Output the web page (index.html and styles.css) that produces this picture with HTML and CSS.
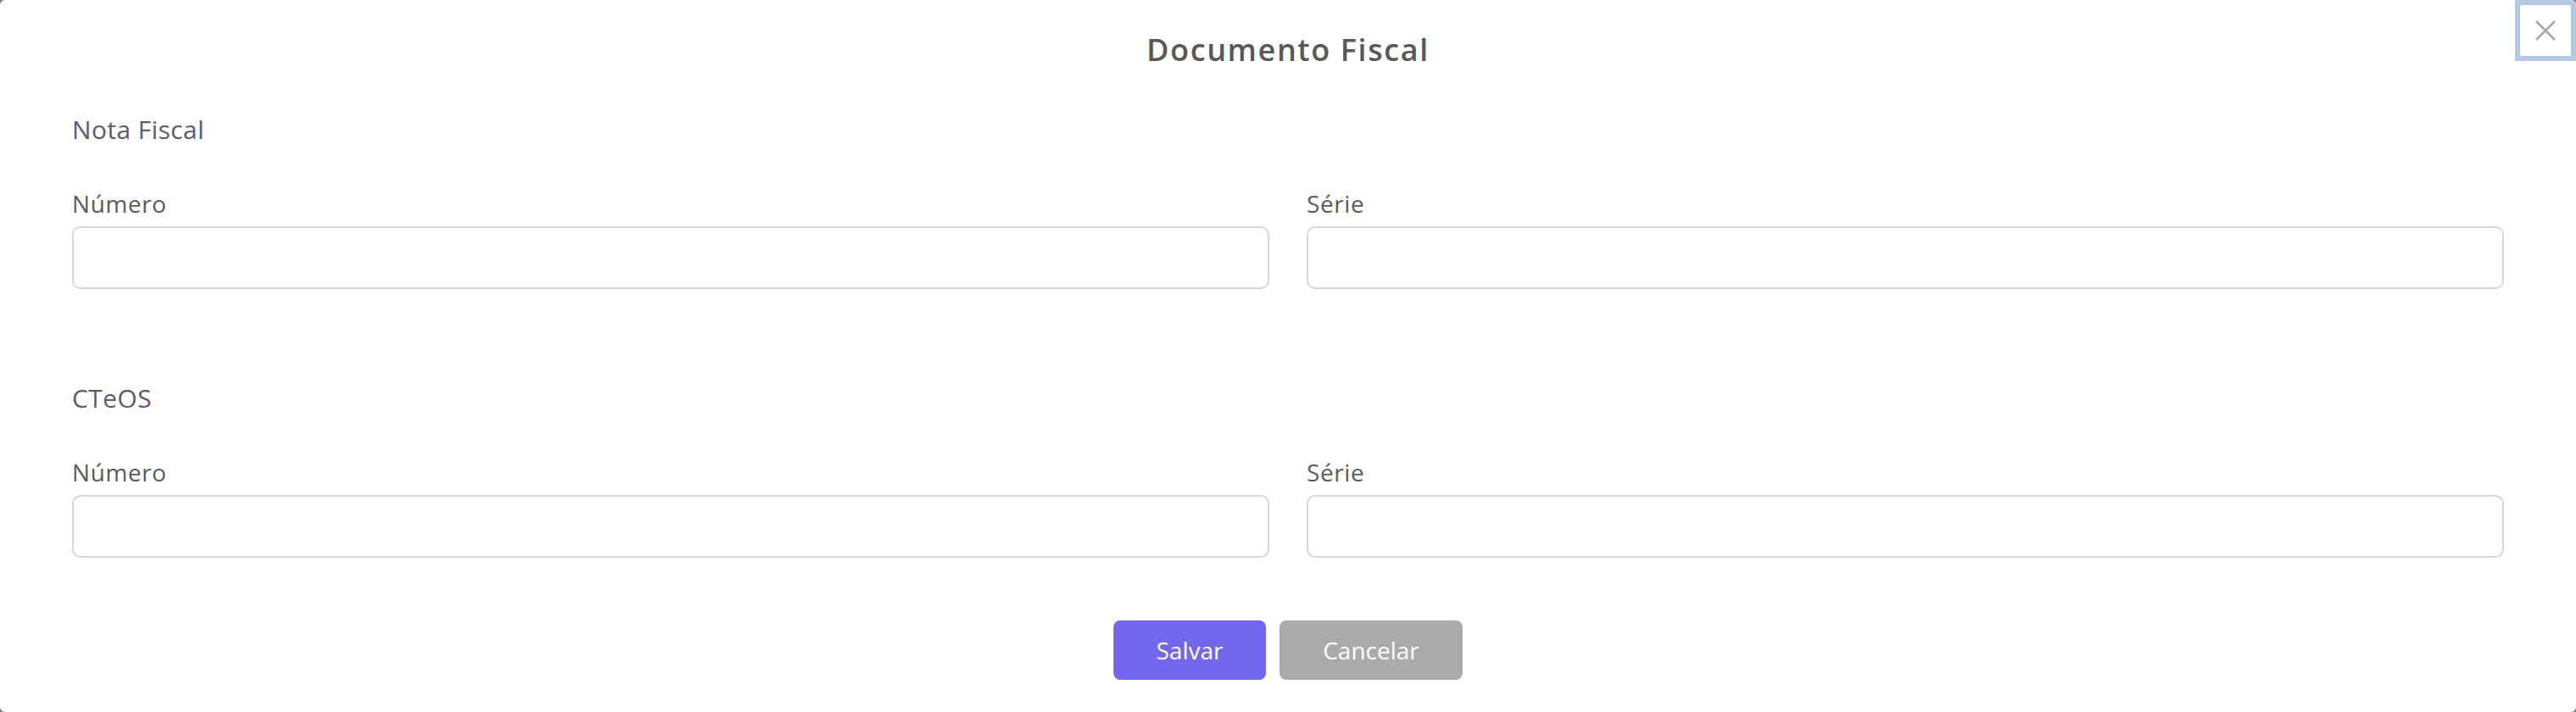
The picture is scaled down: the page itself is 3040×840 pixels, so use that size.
FILE: index.html
```html
<!DOCTYPE html>
<html lang="pt-BR">
<head>
<meta charset="utf-8">
<title>Documento Fiscal</title>
<link rel="stylesheet" href="styles.css">
</head>
<body>
<div class="modal">
  <button class="close" aria-label="Fechar">
    <svg viewBox="0 0 26 26" width="26" height="26"><path d="M2 2 L24 24 M24 2 L2 24" stroke="#a9a9a9" stroke-width="2.6" fill="none"/></svg>
  </button>
  <h1 class="title">Documento Fiscal</h1>
  <section class="group">
    <h2 class="group-title">Nota Fiscal</h2>
    <div class="fields">
      <label class="field"><span class="label">Número</span><input class="input" type="text"></label>
      <label class="field"><span class="label">Série</span><input class="input" type="text"></label>
    </div>
  </section>
  <section class="group group-2">
    <h2 class="group-title">CTeOS</h2>
    <div class="fields">
      <label class="field"><span class="label">Número</span><input class="input" type="text"></label>
      <label class="field"><span class="label">Série</span><input class="input" type="text"></label>
    </div>
  </section>
  <div class="actions">
    <button class="btn btn-primary">Salvar</button>
    <button class="btn btn-secondary">Cancelar</button>
  </div>
</div>
</body>
</html>
```
FILE: styles.css
```css
* { box-sizing: border-box; }
html, body { margin: 0; padding: 0; }
body {
  width: 3040px;
  height: 840px;
  background: #7f7f7f;
  font-family: "Open Sans", "Noto Sans", sans-serif;
  overflow: hidden;
}
.modal {
  position: relative;
  width: 3040px;
  height: 840px;
  background: #fff;
  border-radius: 6px;
  padding: 0 85px;
  display: flex;
  flex-direction: column;
}
.close {
  position: absolute;
  top: 0;
  right: 0;
  width: 72px;
  height: 72px;
  border: 6px solid #b2cbe3;
  border-top-right-radius: 8px;
  background: #fff;
  padding: 0;
  display: flex;
  align-items: center;
  justify-content: center;
}
.title {
  margin: 37px 0 0;
  text-align: center;
  font-size: 36px;
  line-height: 44px;
  font-weight: 600;
  letter-spacing: 1.6px;
  color: #585858;
}
.group { margin-top: 54px; }
.group-2 { margin-top: 111px; }
.group-title {
  margin: 0;
  font-size: 30px;
  line-height: 36px;
  font-weight: 400;
  letter-spacing: 0.4px;
  color: #5e5873;
}
.fields {
  margin-top: 52px;
  display: grid;
  grid-template-columns: 1fr 1fr;
  column-gap: 44px;
}
.field { display: flex; flex-direction: column; }
.label {
  font-size: 28px;
  line-height: 34px;
  font-weight: 400;
  letter-spacing: 0.6px;
  color: #5b5b5b;
  margin-bottom: 10px;
}
.input {
  height: 74px;
  border: 2px solid #d8d6de;
  border-radius: 10px;
  background: #fff;
  font: inherit;
}
.actions {
  margin-top: 74px;
  display: flex;
  justify-content: center;
  gap: 16px;
}
.btn {
  height: 70px;
  border: 0;
  border-radius: 8px;
  color: #fff;
  font-family: inherit;
  font-size: 28px;
  font-weight: 500;
}
.btn-primary { width: 180px; background: #7367f0; }
.btn-secondary { width: 216px; background: #aaaaaa; }
```
